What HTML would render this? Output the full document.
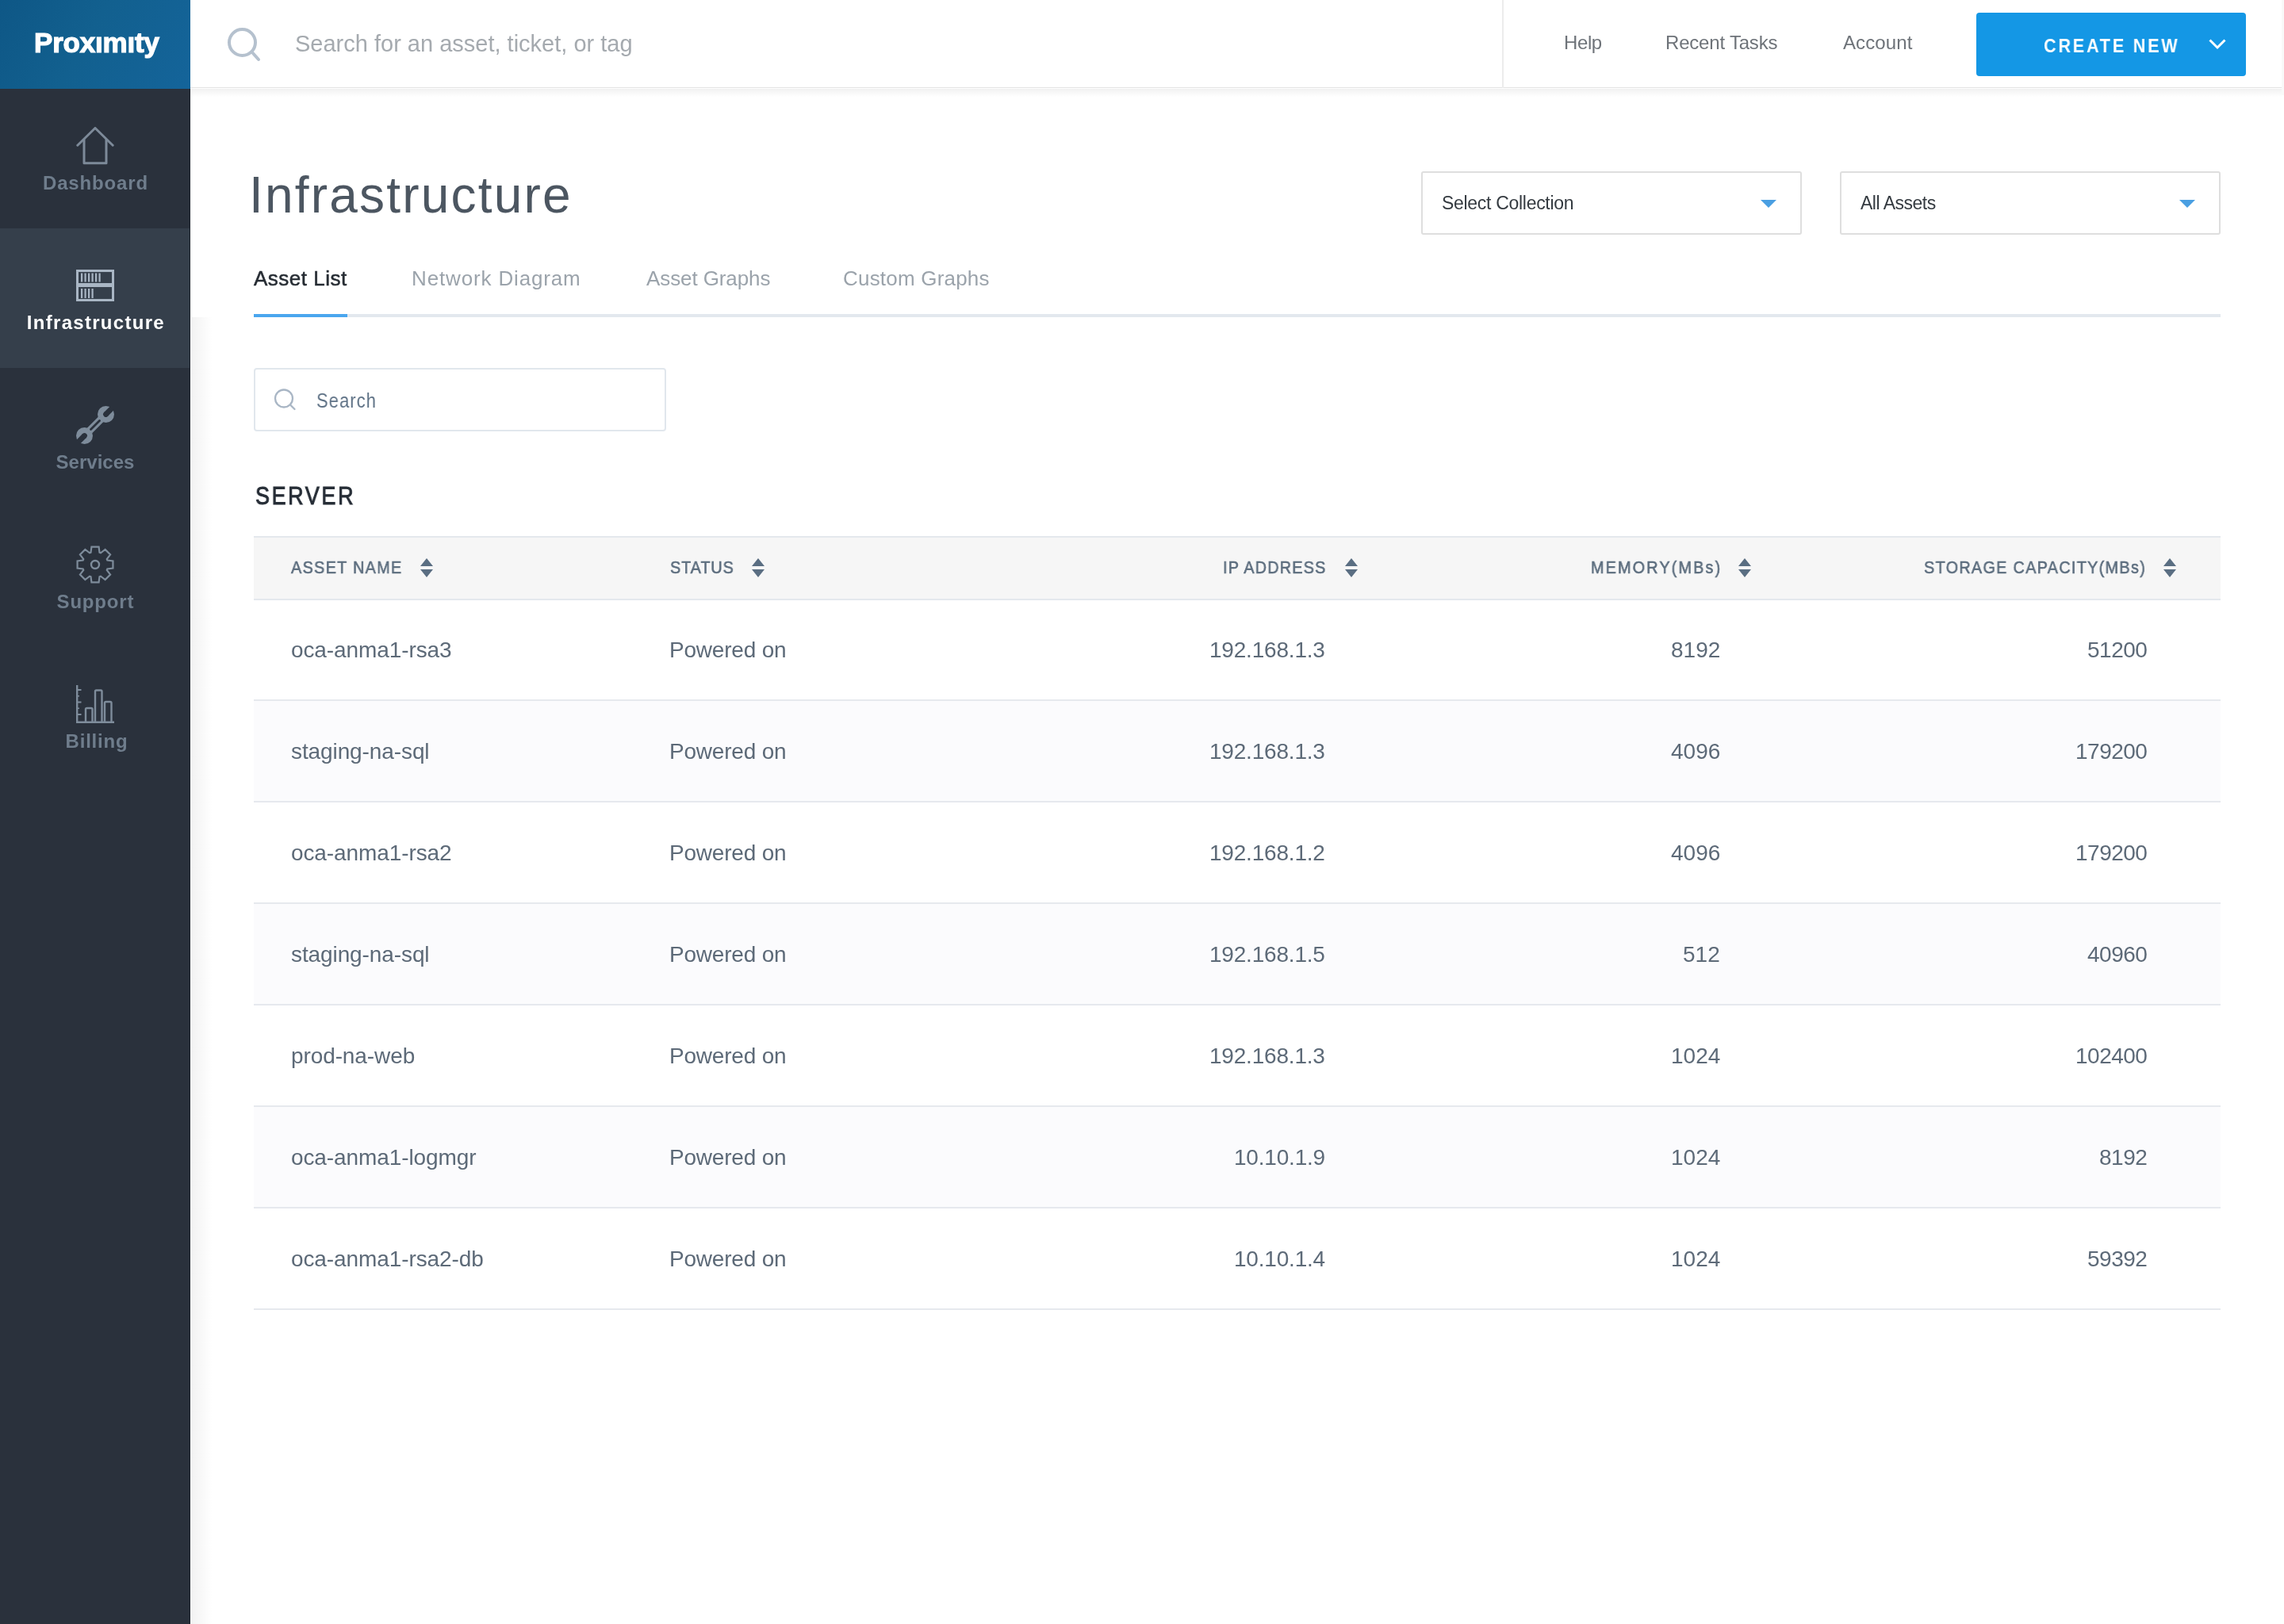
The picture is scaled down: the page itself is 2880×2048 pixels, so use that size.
<!DOCTYPE html>
<html>
<head>
<meta charset="utf-8">
<style>
*{margin:0;padding:0;box-sizing:border-box}
html,body{width:2880px;height:2048px;overflow:hidden;background:#fff;font-family:"Liberation Sans",sans-serif}
.a{position:absolute}
.t{position:absolute;white-space:nowrap;line-height:1;will-change:transform}
#side{left:0;top:0;width:240px;height:2048px;background:#2a313c}
#logo{left:0;top:0;width:240px;height:112px;background:linear-gradient(120deg,#0e5786 0%,#12608f 45%,#14649a 100%)}
#active{left:0;top:288px;width:240px;height:176px;background:#353f4b}
#sideedge{left:239px;top:112px;width:1px;height:1936px;background:#1e242d}
#hdr{left:240px;top:0;width:2637px;height:111px;background:#fff;border-bottom:1px solid #e3e3e3}
#hdrshadow{left:240px;top:112px;width:2637px;height:10px;background:linear-gradient(#f1f1f1,#fff)}
#leftshadow{left:241px;top:400px;width:26px;height:1648px;background:linear-gradient(90deg,#f2f2f2,#fff)}
.lbl{font-weight:bold;font-size:24px;color:#6f7d8c;text-align:center;left:0;width:240px}
.nav{font-size:24px;color:#6e7379}
.th{font-size:22px;color:#5c6d7e;-webkit-text-stroke:0.6px #5c6d7e;transform:scaleX(0.9);transform-origin:0 0}
.td{font-size:28px;color:#5d6a78}
.r{text-align:right}
.row{left:320px;width:2480px;height:128px;border-bottom:2px solid #e6e9ee}
.tab{font-size:26px;color:#9ba3ab}
</style>
</head>
<body>
<!-- sidebar -->
<div id="side" class="a"></div>
<div id="logo" class="a"></div>
<div id="active" class="a"></div>
<div id="sideedge" class="a"></div>
<div class="t" style="left:43px;top:36px;font-size:35px;font-weight:bold;color:#fff;letter-spacing:-0.2px;-webkit-text-stroke:1.2px #fff">Prox&#305;m&#305;ty</div>

<!-- sidebar icons -->
<svg class="a" style="left:96px;top:160px" width="48" height="48" viewBox="0 0 48 48">
  <path d="M1.8 23.2 L24 1.5 L46.2 23.2" fill="none" stroke="#7d8a99" stroke-width="3" stroke-linecap="round" stroke-linejoin="round"/>
  <path d="M10 15.5 V45.8 H38 V15.5" fill="none" stroke="#7d8a99" stroke-width="3" stroke-linejoin="round"/>
</svg>
<div class="t lbl" style="top:219px;letter-spacing:0.85px;padding-left:1px">Dashboard</div>

<svg class="a" style="left:96px;top:340px" width="48" height="40" viewBox="0 0 48 40">
  <rect x="1.5" y="1.5" width="45" height="37" fill="none" stroke="#a9b6c4" stroke-width="3"/>
  <rect x="0" y="17" width="48" height="5" fill="#a9b6c4"/>
  <g fill="#a9b6c4">
    <rect x="6" y="4.5" width="2.2" height="11"/><rect x="10.5" y="4.5" width="2.2" height="11"/><rect x="15" y="4.5" width="2.2" height="11"/><rect x="19.5" y="4.5" width="2.2" height="11"/><rect x="24" y="4.5" width="2.2" height="11"/><rect x="28.5" y="4.5" width="2.2" height="11"/>
    <rect x="6" y="24" width="2.2" height="12"/><rect x="10.5" y="24" width="2.2" height="12"/><rect x="15" y="24" width="2.2" height="12"/><rect x="19.5" y="24" width="2.2" height="12"/>
  </g>
</svg>
<div class="t lbl" style="top:395px;color:#fff;letter-spacing:1.3px;padding-left:1.8px">Infrastructure</div>

<svg class="a" style="left:96px;top:512px" width="48" height="48" viewBox="0 0 48 48">
  <defs><mask id="wm" maskUnits="userSpaceOnUse" x="0" y="0" width="48" height="48">
    <rect width="48" height="48" fill="#fff"/>
    <g transform="translate(37.5 10.5) rotate(45)"><rect x="-3.4" y="-16" width="6.8" height="16"/><circle cx="0" cy="0" r="3.4"/></g>
    <g transform="translate(10.5 37.5) rotate(-135)"><rect x="-3.4" y="-16" width="6.8" height="16"/><circle cx="0" cy="0" r="3.4"/></g>
    <path d="M18.5 29.5 L29.5 18.5" stroke="#000" stroke-width="2.8" stroke-linecap="round"/>
  </mask></defs>
  <g mask="url(#wm)" fill="#7e8c9b">
    <circle cx="37.5" cy="10.5" r="10.5"/>
    <circle cx="10.5" cy="37.5" r="10.5"/>
    <path d="M10.5 37.5 L37.5 10.5" stroke="#7e8c9b" stroke-width="9"/>
  </g>
</svg>
<div class="t lbl" style="top:571px">Services</div>

<svg class="a" style="left:96px;top:688px" width="48" height="48" viewBox="0 0 48 48">
  <path id="gear" fill="none" stroke="#7e8c9b" stroke-width="2.2" d="M18.51 8.65 L19.43 1.56 L28.57 1.56 L29.49 8.65 A16.3 16.3 0 0 1 30.97 9.27 L36.64 4.90 L43.10 11.36 L38.73 17.03 A16.3 16.3 0 0 1 39.35 18.51 L46.44 19.43 L46.44 28.57 L39.35 29.49 A16.3 16.3 0 0 1 38.73 30.97 L43.10 36.64 L36.64 43.10 L30.97 38.73 A16.3 16.3 0 0 1 29.49 39.35 L28.57 46.44 L19.43 46.44 L18.51 39.35 A16.3 16.3 0 0 1 17.03 38.73 L11.36 43.10 L4.90 36.64 L9.27 30.97 A16.3 16.3 0 0 1 8.65 29.49 L1.56 28.57 L1.56 19.43 L8.65 18.51 A16.3 16.3 0 0 1 9.27 17.03 L4.90 11.36 L11.36 4.90 L17.03 9.27 A16.3 16.3 0 0 1 18.51 8.65 Z"/>
  <circle cx="24" cy="24" r="5" fill="none" stroke="#7e8c9b" stroke-width="2.4"/>
</svg>
<div class="t lbl" style="top:747px;letter-spacing:0.8px;padding-left:0.8px">Support</div>

<svg class="a" style="left:96px;top:864px" width="48" height="48" viewBox="0 0 48 48">
  <g fill="none" stroke="#7e8c9b" stroke-width="2.4">
    <path d="M1.2 0 V46.8 H48"/>
    <path d="M12 46.8 V30.5 Q12 29 13.5 29 H19 Q20.5 29 20.5 30.5 V46.8"/>
    <path d="M24 46.8 V8 Q24 6.5 25.5 6.5 H31 Q32.5 6.5 32.5 8 V46.8"/>
    <path d="M36 46.8 V22.5 Q36 21 37.5 21 H43 Q44.5 21 44.5 22.5 V46.8"/>
    <path d="M1.2 6 H6.5 M1.2 21.5 H6.5 M1.2 37 H6.5" stroke-width="2.2"/>
    <path d="M1.2 13.8 H4 M1.2 29.3 H4" stroke-width="1.6"/>
  </g>
</svg>
<div class="t lbl" style="top:923px;letter-spacing:0.8px;padding-left:4px">Billing</div>

<!-- header -->
<div id="hdr" class="a"></div>
<div id="hdrshadow" class="a"></div>
<div class="a" style="left:2877px;top:0;width:3px;height:120px;background:#f9f9f9"></div>
<div id="leftshadow" class="a"></div>
<svg class="a" style="left:286px;top:34px" width="44" height="46" viewBox="0 0 44 46">
  <circle cx="19.5" cy="19.5" r="16.5" fill="none" stroke="#b5c1ce" stroke-width="4"/>
  <path d="M31.5 31.5 L40 41" stroke="#b5c1ce" stroke-width="4" stroke-linecap="round"/>
</svg>
<div class="t" style="left:372px;top:41px;font-size:29px;color:#a5aaaf;letter-spacing:0px">Search for an asset, ticket, or tag</div>
<div class="a" style="left:1894px;top:0;width:2px;height:111px;background:#ececec"></div>
<div class="t nav" style="left:1972px;top:42px;letter-spacing:-0.4px">Help</div>
<div class="t nav" style="left:2100px;top:42px;letter-spacing:-0.2px">Recent Tasks</div>
<div class="t nav" style="left:2324px;top:42px;letter-spacing:0.1px">Account</div>
<div class="a" style="left:2492px;top:16px;width:340px;height:80px;background:#1497e5;border-radius:4px"></div>
<div class="t" style="left:2577px;top:46px;font-size:24px;font-weight:bold;color:#fff;letter-spacing:3.1px;transform:scaleX(0.9);transform-origin:0 0">CREATE NEW</div>
<svg class="a" style="left:2784px;top:48px" width="24" height="16" viewBox="0 0 24 16">
  <path d="M2.5 2.5 L12 12 L21.5 2.5" fill="none" stroke="#fff" stroke-width="3"/>
</svg>

<!-- title + dropdowns -->
<div class="t" style="left:314px;top:214px;font-size:64px;color:#4c5661;letter-spacing:2.2px">Infrastructure</div>
<div class="a" style="left:1792px;top:216px;width:480px;height:80px;border:2px solid #dedede;border-radius:3px"></div>
<div class="t" style="left:1818px;top:245px;font-size:23px;color:#343a40;letter-spacing:-0.3px">Select Collection</div>
<svg class="a" style="left:2220px;top:252px" width="20" height="10" viewBox="0 0 20 10"><path d="M0 0 H20 L10 10 Z" fill="#4a9fe2"/></svg>
<div class="a" style="left:2320px;top:216px;width:480px;height:80px;border:2px solid #dedede;border-radius:3px"></div>
<div class="t" style="left:2346px;top:245px;font-size:23px;color:#343a40;letter-spacing:-0.5px">All Assets</div>
<svg class="a" style="left:2748px;top:252px" width="20" height="10" viewBox="0 0 20 10"><path d="M0 0 H20 L10 10 Z" fill="#4a9fe2"/></svg>

<!-- tabs -->
<div class="t tab" style="left:320px;top:338px;color:#262c33;letter-spacing:0.5px;-webkit-text-stroke:0.5px #262c33">Asset List</div>
<div class="t tab" style="left:519px;top:338px;letter-spacing:0.85px">Network Diagram</div>
<div class="t tab" style="left:815px;top:338px;letter-spacing:-0.1px">Asset Graphs</div>
<div class="t tab" style="left:1063px;top:338px;letter-spacing:0.2px">Custom Graphs</div>
<div class="a" style="left:320px;top:396px;width:2480px;height:4px;background:#e3e8ee"></div>
<div class="a" style="left:320px;top:396px;width:118px;height:4px;background:#4aa6ee"></div>

<!-- search -->
<div class="a" style="left:320px;top:464px;width:520px;height:80px;border:2px solid #e1e7ed;border-radius:4px"></div>
<svg class="a" style="left:344px;top:488px" width="32" height="32" viewBox="0 0 32 32">
  <circle cx="14" cy="14.5" r="11" fill="none" stroke="#a9b6c5" stroke-width="2.3"/>
  <path d="M22 22.5 L27.5 28" stroke="#a9b6c5" stroke-width="2.3" stroke-linecap="round"/>
</svg>
<div class="t" style="left:399px;top:493px;font-size:25px;color:#5f7286;letter-spacing:1.2px;transform:scaleX(0.88);transform-origin:0 0">Search</div>

<!-- SERVER -->
<div class="t" style="left:322px;top:609px;font-size:32px;color:#262d36;-webkit-text-stroke:1px #262d36;letter-spacing:3.2px;transform:scaleX(0.84);transform-origin:0 0">SERVER</div>

<!-- table header -->
<div class="a" style="left:320px;top:676px;width:2480px;height:81px;background:#f6f6f6;border-top:2px solid #e4e8ed;border-bottom:2px solid #e4e8ed"></div>
<div class="t th" style="left:367px;top:705px;letter-spacing:1.47px">ASSET NAME</div>
<div class="t th" style="left:845px;top:705px;letter-spacing:1.04px">STATUS</div>
<div class="t th" style="left:1542px;top:705px;letter-spacing:1.34px">IP ADDRESS</div>
<div class="t th" style="left:2006px;top:705px;letter-spacing:2.4px">MEMORY(MBs)</div>
<div class="t th" style="left:2426px;top:705px;letter-spacing:1.47px">STORAGE CAPACITY(MBs)</div>

<!--ROWS-->
<div class="a row" style="top:757px;height:127px;background:#fff"></div>
<div class="t td" style="left:367px;top:806.1px;letter-spacing:-0.1px">oca-anma1-rsa3</div>
<div class="t td" style="left:844px;top:806.1px;letter-spacing:-0.2px">Powered on</div>
<div class="t td r" style="right:1209px;top:806.1px;letter-spacing:-0.2px">192.168.1.3</div>
<div class="t td r" style="right:711px;top:806.1px;letter-spacing:0px">8192</div>
<div class="t td r" style="right:173px;top:806.1px;letter-spacing:-0.5px">51200</div>
<div class="a row" style="top:884px;background:#fbfbfd"></div>
<div class="t td" style="left:367px;top:934.1px;letter-spacing:-0.1px">staging-na-sql</div>
<div class="t td" style="left:844px;top:934.1px;letter-spacing:-0.2px">Powered on</div>
<div class="t td r" style="right:1209px;top:934.1px;letter-spacing:-0.2px">192.168.1.3</div>
<div class="t td r" style="right:711px;top:934.1px;letter-spacing:0px">4096</div>
<div class="t td r" style="right:173px;top:934.1px;letter-spacing:-0.5px">179200</div>
<div class="a row" style="top:1012px;background:#fff"></div>
<div class="t td" style="left:367px;top:1062.1px;letter-spacing:-0.1px">oca-anma1-rsa2</div>
<div class="t td" style="left:844px;top:1062.1px;letter-spacing:-0.2px">Powered on</div>
<div class="t td r" style="right:1209px;top:1062.1px;letter-spacing:-0.2px">192.168.1.2</div>
<div class="t td r" style="right:711px;top:1062.1px;letter-spacing:0px">4096</div>
<div class="t td r" style="right:173px;top:1062.1px;letter-spacing:-0.5px">179200</div>
<div class="a row" style="top:1140px;background:#fbfbfd"></div>
<div class="t td" style="left:367px;top:1190.1px;letter-spacing:-0.1px">staging-na-sql</div>
<div class="t td" style="left:844px;top:1190.1px;letter-spacing:-0.2px">Powered on</div>
<div class="t td r" style="right:1209px;top:1190.1px;letter-spacing:-0.2px">192.168.1.5</div>
<div class="t td r" style="right:711px;top:1190.1px;letter-spacing:0px">512</div>
<div class="t td r" style="right:173px;top:1190.1px;letter-spacing:-0.5px">40960</div>
<div class="a row" style="top:1268px;background:#fff"></div>
<div class="t td" style="left:367px;top:1318.1px;letter-spacing:-0.1px">prod-na-web</div>
<div class="t td" style="left:844px;top:1318.1px;letter-spacing:-0.2px">Powered on</div>
<div class="t td r" style="right:1209px;top:1318.1px;letter-spacing:-0.2px">192.168.1.3</div>
<div class="t td r" style="right:711px;top:1318.1px;letter-spacing:0px">1024</div>
<div class="t td r" style="right:173px;top:1318.1px;letter-spacing:-0.5px">102400</div>
<div class="a row" style="top:1396px;background:#fbfbfd"></div>
<div class="t td" style="left:367px;top:1446.1px;letter-spacing:-0.1px">oca-anma1-logmgr</div>
<div class="t td" style="left:844px;top:1446.1px;letter-spacing:-0.2px">Powered on</div>
<div class="t td r" style="right:1209px;top:1446.1px;letter-spacing:-0.2px">10.10.1.9</div>
<div class="t td r" style="right:711px;top:1446.1px;letter-spacing:0px">1024</div>
<div class="t td r" style="right:173px;top:1446.1px;letter-spacing:-0.5px">8192</div>
<div class="a row" style="top:1524px;background:#fff"></div>
<div class="t td" style="left:367px;top:1574.1px;letter-spacing:-0.1px">oca-anma1-rsa2-db</div>
<div class="t td" style="left:844px;top:1574.1px;letter-spacing:-0.2px">Powered on</div>
<div class="t td r" style="right:1209px;top:1574.1px;letter-spacing:-0.2px">10.10.1.4</div>
<div class="t td r" style="right:711px;top:1574.1px;letter-spacing:0px">1024</div>
<div class="t td r" style="right:173px;top:1574.1px;letter-spacing:-0.5px">59392</div>
<svg class="a" style="left:530px;top:704px" width="16" height="24" viewBox="0 0 16 24"><path d="M8 0 L16 10 H0 Z M0 14 H16 L8 24 Z" fill="#5a6e82"/></svg>
<svg class="a" style="left:948px;top:704px" width="16" height="24" viewBox="0 0 16 24"><path d="M8 0 L16 10 H0 Z M0 14 H16 L8 24 Z" fill="#5a6e82"/></svg>
<svg class="a" style="left:1696px;top:704px" width="16" height="24" viewBox="0 0 16 24"><path d="M8 0 L16 10 H0 Z M0 14 H16 L8 24 Z" fill="#5a6e82"/></svg>
<svg class="a" style="left:2192px;top:704px" width="16" height="24" viewBox="0 0 16 24"><path d="M8 0 L16 10 H0 Z M0 14 H16 L8 24 Z" fill="#5a6e82"/></svg>
<svg class="a" style="left:2728px;top:704px" width="16" height="24" viewBox="0 0 16 24"><path d="M8 0 L16 10 H0 Z M0 14 H16 L8 24 Z" fill="#5a6e82"/></svg>
<!--/ROWS-->
</body>
</html>
